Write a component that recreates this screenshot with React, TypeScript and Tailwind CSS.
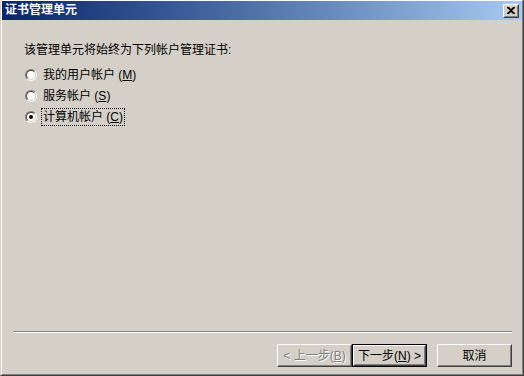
import type { ReactNode } from 'react'

const font = "font-['Liberation_Sans','Noto_Sans_CJK_SC',sans-serif]"

// Win2000 风格的凸起边框
function Raised({ children, className = '' }: { children: ReactNode; className?: string }) {
  return (
    <div className={`border-t border-l border-t-white border-l-white border-r border-b border-r-[#404040] border-b-[#404040] ${className}`}>
      <div className="flex h-full w-full items-center justify-center border-t border-l border-t-[#d4d0c8] border-l-[#d4d0c8] border-r border-b border-r-[#808080] border-b-[#808080]">
        {children}
      </div>
    </div>
  )
}

function Radio({ checked }: { checked?: boolean }) {
  return (
    <div className="h-[12px] w-[12px] shrink-0 rounded-full border border-t-[#808080] border-l-[#808080] border-r-white border-b-white">
      <div className="flex h-full w-full items-center justify-center rounded-full border border-t-[#404040] border-l-[#404040] border-r-[#d4d0c8] border-b-[#d4d0c8] bg-white">
        {checked && <div className="h-[4px] w-[4px] rounded-full bg-black" />}
      </div>
    </div>
  )
}

function Option({ label, hotkey, checked }: { label: string; hotkey: string; checked?: boolean }) {
  return (
    <div className="flex h-[21px] items-center">
      <div className="ml-[1px] mr-[4px]">
        <Radio checked={checked} />
      </div>
      <span
        className={`flex h-[18px] items-center px-[1px] leading-[16px] ${
          checked ? 'border border-dotted border-black' : 'border border-transparent'
        }`}
      >
        {label} (<span className="underline underline-offset-1">{hotkey}</span>)
      </span>
    </div>
  )
}

export default function App() {
  return (
    <div className={`h-[376px] w-[524px] bg-[#d4d0c8] text-[12px] text-black ${font}`}>
      <div className="flex h-full w-full flex-col border-l border-l-[#d4d0c8] border-r border-b border-r-[#404040] border-b-[#404040]">
        <div className="flex h-full w-full flex-col border-t border-l border-t-white border-l-white border-r border-b border-r-[#808080] border-b-[#808080]">
          {/* 标题栏 */}
          <div className="flex h-[19px] shrink-0 items-center justify-between bg-linear-to-r from-[#0a246a] to-[#a6caf0] pl-[3px] pr-[3px]">
            <span className="text-[12px] font-bold leading-[19px] text-white">证书管理单元</span>
            <Raised className="h-[14px] w-[16px] bg-[#d4d0c8]">
              <svg width="8" height="7" viewBox="0 0 8 7">
                <path d="M0 0h2l2 2 2-2h2v1L5 3.5 8 6v1H6L4 5 2 7H0V6l3-2.5L0 1z" fill="black" />
              </svg>
            </Raised>
          </div>

          {/* 内容 */}
          <div className="flex flex-1 flex-col pl-[22px] pt-[22px]">
            <div className="h-[16px] leading-[16px]">该管理单元将始终为下列帐户管理证书:</div>
            <div className="mt-[6px] flex flex-col">
              <Option label="我的用户帐户" hotkey="M" />
              <Option label="服务帐户" hotkey="S" />
              <Option label="计算机帐户" hotkey="C" checked />
            </div>
          </div>

          {/* 底部按钮 */}
          <div className="ml-[11px] mr-[10px] border-t border-t-[#808080] border-b border-b-white" />
          <div className="mt-[11px] mb-[7px] mr-[10px] flex justify-end">
            <Raised className="h-[23px] w-[75px]">
              <span className="text-[#808080] [text-shadow:1px_1px_0_#ffffff]">
                &lt; 上一步(<span className="underline underline-offset-1">B</span>)
              </span>
            </Raised>
            <div className="h-[23px] w-[75px] border border-black">
              <Raised className="h-full w-full">
                <span>
                  下一步(<span className="underline underline-offset-1">N</span>) &gt;
                </span>
              </Raised>
            </div>
            <Raised className="ml-[10px] h-[23px] w-[75px]">
              <span>取消</span>
            </Raised>
          </div>
        </div>
      </div>
    </div>
  )
}
